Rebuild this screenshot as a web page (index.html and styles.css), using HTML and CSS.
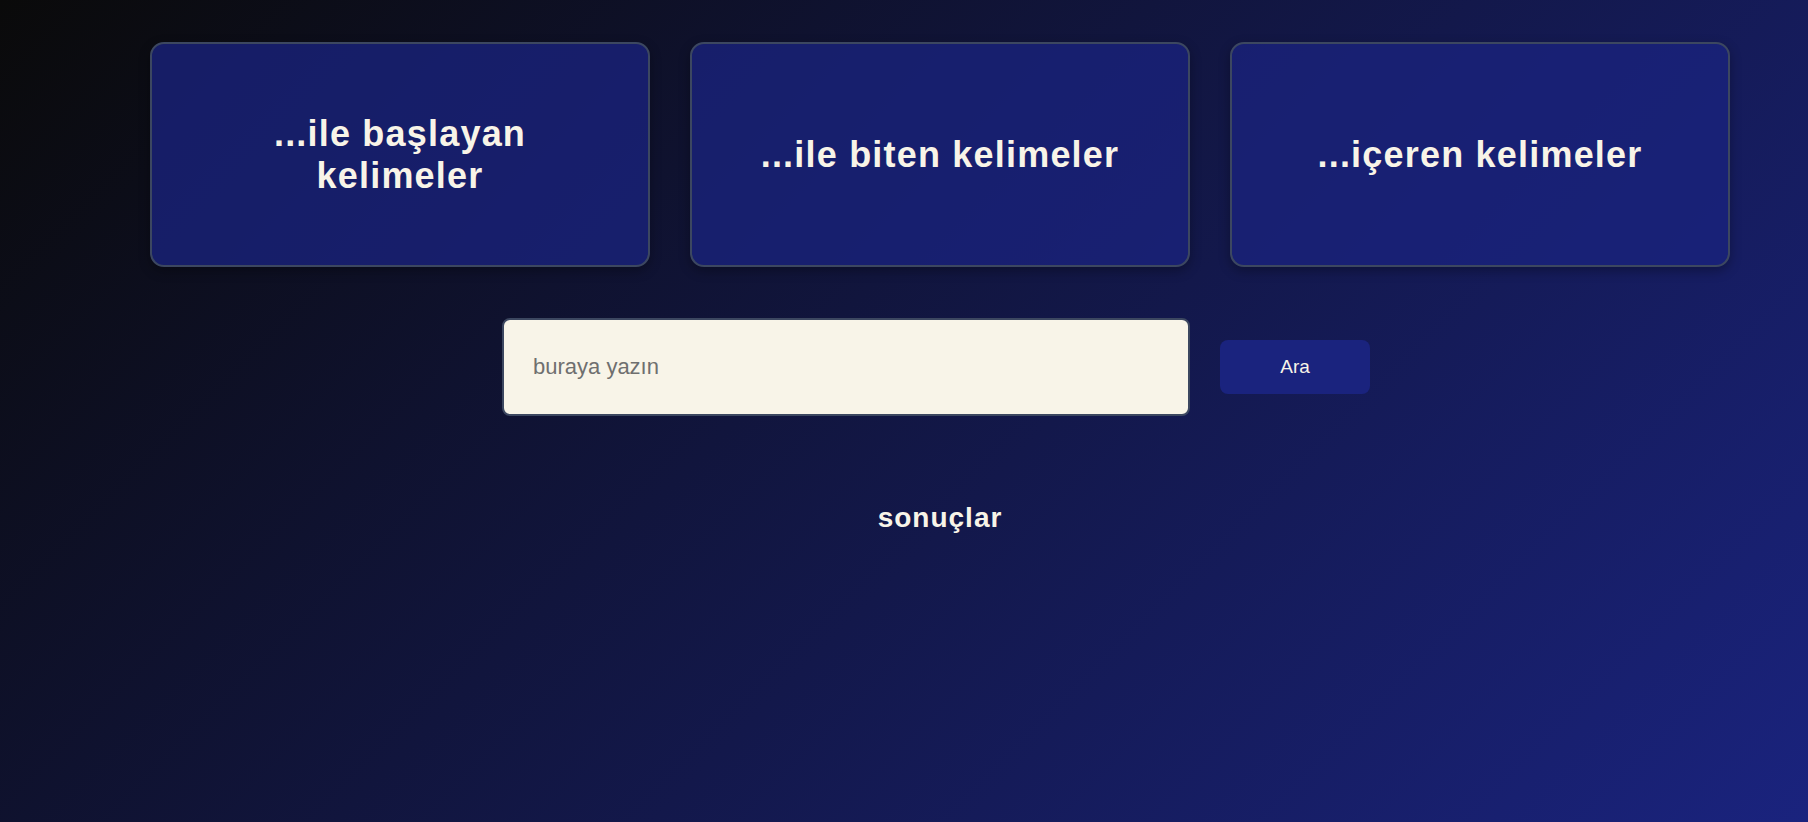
FILE: index.html
```html
<!DOCTYPE html>
<html lang="tr">
<head>
<meta charset="utf-8">
<title>Kelime Arama</title>
<link rel="stylesheet" href="styles.css">
</head>
<body>
<main class="page">
  <section class="cards">
    <div class="card"><h2 class="card-title">...ile başlayan kelimeler</h2></div>
    <div class="card"><h2 class="card-title">...ile biten kelimeler</h2></div>
    <div class="card"><h2 class="card-title">...içeren kelimeler</h2></div>
  </section>
  <section class="search">
    <input class="search-input" type="text" placeholder="buraya yazın">
    <button class="search-btn" type="button">Ara</button>
  </section>
  <section class="results">
    <h3 class="results-title">sonuçlar</h3>
  </section>
</main>
</body>
</html>
```

FILE: styles.css
```css
* { box-sizing: border-box; }
html, body { margin: 0; padding: 0; height: 100%; }
body {
  background: linear-gradient(135deg, #0a0a0a 0%, #1a237e 100%);
  background-attachment: fixed;
  font-family: "Liberation Sans", Arial, sans-serif;
  color: #f8f4e8;
  min-height: 822px;
  overflow: hidden;
}
.page {
  margin-left: 72px;
  width: 1736px;
  padding-top: 42px;
  display: flex;
  flex-direction: column;
  align-items: center;
}
.cards {
  display: grid;
  grid-template-columns: repeat(3, 500px);
  gap: 40px;
  justify-content: center;
}
.card {
  height: 225px;
  border: 2px solid #3c4760;
  border-radius: 14px;
  background: rgba(26, 35, 126, 0.78);
  box-shadow: 0 4px 12px rgba(0, 0, 0, 0.3);
  display: flex;
  align-items: center;
  justify-content: center;
  padding: 0 40px;
  text-align: center;
}
.card-title {
  margin: 0;
  font-size: 36px;
  font-weight: 700;
  letter-spacing: 1.2px;
  line-height: normal;
  color: #f8f4e8;
}
.search {
  margin-top: 51px;
  display: flex;
  align-items: center;
  gap: 30px;
  padding-right: 8px;
}
.search-input {
  width: 688px;
  height: 98px;
  border: 2px solid #3c4760;
  border-radius: 8px;
  background: #f8f4e8;
  padding: 0 29px;
  font-family: "Liberation Sans", Arial, sans-serif;
  font-size: 22px;
  color: #333;
  outline: none;
}
.search-input::placeholder { color: #6f6f6f; }
.search-btn {
  width: 150px;
  height: 54px;
  border: none;
  border-radius: 8px;
  background: #1a237e;
  color: #f8f4e8;
  font-family: "Liberation Sans", Arial, sans-serif;
  font-size: 19px;
  cursor: pointer;
}
.results {
  margin-top: 86px;
  text-align: center;
}
.results-title {
  margin: 0;
  font-size: 28px;
  font-weight: 700;
  letter-spacing: 1px;
  line-height: normal;
  color: #f8f4e8;
}
```
